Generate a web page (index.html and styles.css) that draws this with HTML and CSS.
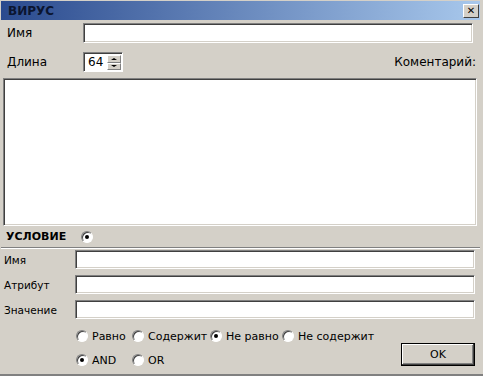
FILE: index.html
```html
<!DOCTYPE html>
<html lang="ru">
<head>
<meta charset="UTF-8">
<title>ВИРУС</title>
<link rel="stylesheet" href="styles.css">
</head>
<body>
<div class="window">
  <div class="titlebar">
    <span class="title">ВИРУС</span>
    <span class="close">&#x2715;</span>
  </div>

  <div class="row row-name">
    <span class="label">Имя</span>
    <div class="field name-field"></div>
  </div>

  <div class="row row-len">
    <span class="label">Длина</span>
    <div class="spin">
      <div class="spin-value">64</div>
      <div class="spin-btns">
        <span class="spin-btn"><i class="arr up"></i></span>
        <span class="spin-btn"><i class="arr down"></i></span>
      </div>
    </div>
    <span class="comment-label">Коментарий:</span>
  </div>

  <div class="field memo"></div>

  <div class="cond-head">
    <span class="cond-title">УСЛОВИЕ</span>
    <span class="radio checked"></span>
  </div>
  <div class="separator"></div>

  <div class="cond">
    <div class="crow"><span class="clabel">Имя</span><div class="field cfield"></div></div>
    <div class="crow"><span class="clabel">Атрибут</span><div class="field cfield"></div></div>
    <div class="crow"><span class="clabel">Значение</span><div class="field cfield"></div></div>
  </div>

  <div class="options">
    <div class="opts">
      <div class="opt-row">
        <label class="opt o1"><span class="radio"></span>Равно</label>
        <label class="opt o2"><span class="radio"></span>Содержит</label>
        <label class="opt o3"><span class="radio checked"></span>Не равно</label>
        <label class="opt"><span class="radio"></span>Не содержит</label>
      </div>
      <div class="opt-row">
        <label class="opt o1"><span class="radio checked"></span>AND</label>
        <label class="opt"><span class="radio"></span>OR</label>
      </div>
    </div>
    <button class="ok">OK</button>
  </div>
</div>
</body>
</html>
```

FILE: styles.css
```css
body {
  margin: 0;
  background: #d4d0c8;
  font-family: "DejaVu Sans", Tahoma, sans-serif;
  font-size: 11px;
  color: #000;
}

.window {
  width: 483px;
  height: 376px;
  box-sizing: border-box;
  padding: 1px 3px 0 1px;
  border-bottom: 2px solid #808080;
  display: flex;
  flex-direction: column;
  overflow: hidden;
}

.titlebar {
  height: 19px;
  display: flex;
  align-items: center;
  justify-content: space-between;
  padding: 0 1px 0 7px;
  background: linear-gradient(to right, #2a4a8e, #a8c8ec);
}

.title {
  font-weight: bold;
  font-size: 12px;
  color: #0b1530;
}

.close {
  width: 16px;
  height: 14px;
  box-sizing: border-box;
  background: #d4d0c8;
  border: 1px solid;
  border-color: #fff #404040 #404040 #fff;
  font-size: 10px;
  font-weight: bold;
  line-height: 12px;
  text-align: center;
}

/* sunken edit box */
.field {
  background: #fff;
  box-sizing: border-box;
  border: 1px solid;
  border-color: #808080 #fff #fff #808080;
  box-shadow: inset 1px 1px 0 #404040, inset -1px -1px 0 #d4d0c8;
}

.row {
  display: flex;
  align-items: center;
}

.label {
  width: 76px;
  padding-left: 6px;
  font-size: 12px;
}

.row-name {
  margin-top: 3px;
  height: 20px;
}

.name-field {
  width: 390px;
  height: 20px;
}

.row-len {
  margin-top: 9px;
  height: 20px;
}

.spin {
  display: flex;
  width: 40px;
  height: 20px;
  box-sizing: border-box;
  background: #fff;
  border: 1px solid;
  border-color: #808080 #fff #fff #808080;
  box-shadow: inset 1px 1px 0 #404040;
  padding: 2px 1px 1px 2px;
}

.spin-value {
  flex: 1;
  font-size: 12px;
  line-height: 15px;
  padding-left: 2px;
}

.spin-btns {
  display: flex;
  flex-direction: column;
  width: 14px;
}

.spin-btn {
  flex: 1;
  box-sizing: border-box;
  background: #d4d0c8;
  border: 1px solid;
  border-color: #fff #808080 #808080 #fff;
  display: flex;
  align-items: center;
  justify-content: center;
}

.arr {
  width: 0;
  height: 0;
  border-left: 3px solid transparent;
  border-right: 3px solid transparent;
}

.arr.up { border-bottom: 2px solid #000; }
.arr.down { border-top: 2px solid #000; }

.comment-label {
  margin-left: auto;
  margin-right: 4px;
  font-size: 12px;
}

.memo {
  margin: 6px 3px 0 2px;
  height: 148px;
}

.cond-head {
  display: flex;
  align-items: center;
  height: 19px;
  margin-top: 1px;
}

.cond-title {
  width: 75px;
  padding-left: 5px;
  font-weight: bold;
  font-size: 11px;
}

.separator {
  margin-top: 1px;
  border-top: 1px solid #808080;
  border-bottom: 1px solid #fff;
}

.cond {
  display: flex;
  flex-direction: column;
  gap: 6px;
  margin-top: 1px;
}

.crow {
  display: flex;
  align-items: center;
}

.clabel {
  width: 71px;
  padding-left: 3px;
  font-size: 10.5px;
}

.cfield {
  width: 400px;
  height: 19px;
}

.options {
  display: flex;
  justify-content: space-between;
  align-items: flex-end;
  margin-top: 10px;
  padding-left: 75px;
}

.opts {
  display: flex;
  flex-direction: column;
  gap: 10px;
}

.opt-row {
  display: flex;
  align-items: center;
  height: 14px;
}

.opt {
  display: flex;
  align-items: center;
  gap: 4px;
  font-size: 11px;
  white-space: nowrap;
  flex-shrink: 0;
}

.o1 { width: 56px; }
.o2 { width: 78px; }
.o3 { width: 72px; }

.radio {
  width: 12px;
  height: 12px;
  box-sizing: border-box;
  border-radius: 50%;
  background: #fff;
  border: 1px solid;
  border-color: #808080 #fff #fff #808080;
  box-shadow: inset 1px 1px 0 #404040;
  display: inline-flex;
  align-items: center;
  justify-content: center;
  flex-shrink: 0;
}

.radio.checked::after {
  content: "";
  width: 4px;
  height: 4px;
  border-radius: 50%;
  background: #000;
}

.ok {
  width: 74px;
  height: 23px;
  margin: 0 5px 1px 0;
  background: #d4d0c8;
  font-family: "DejaVu Sans", Tahoma, sans-serif;
  font-size: 11px;
  border: 1px solid #000;
  box-shadow: inset -1px -1px 0 #404040, inset 1px 1px 0 #fff, inset -2px -2px 0 #808080;
  padding: 0;
}
```
